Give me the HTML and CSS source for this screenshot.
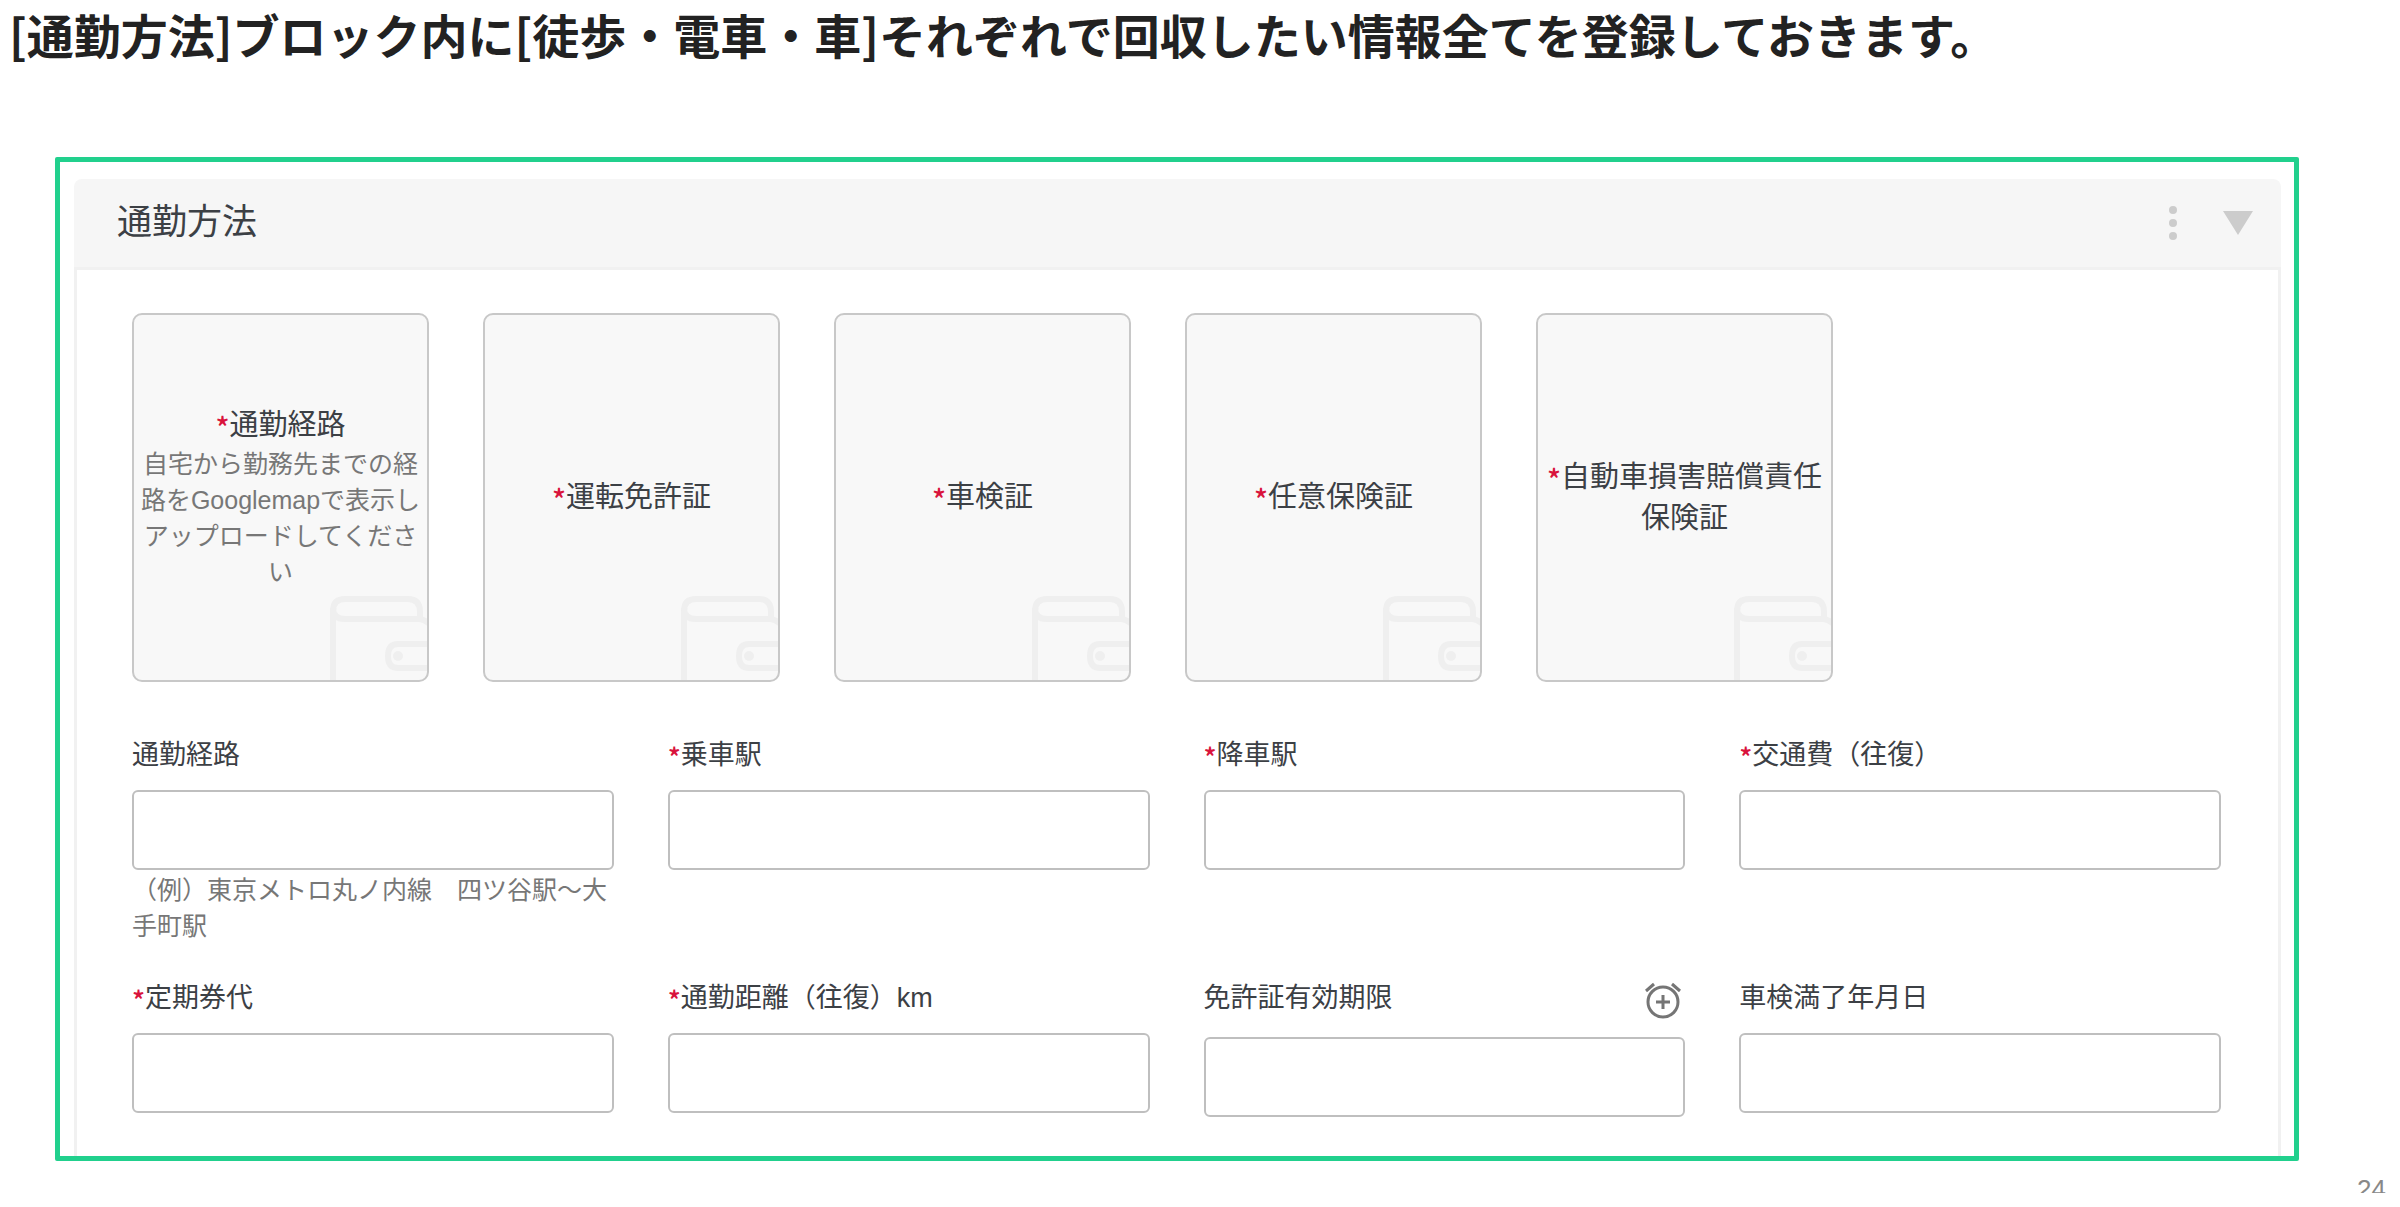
FILE: index.html
```html
<!DOCTYPE html>
<html lang="ja">
<head>
<meta charset="utf-8">
<meta name="viewport" content="width=device-width, initial-scale=1">
<title>通勤方法</title>
<link rel="stylesheet" href="styles.css">
</head>
<body>
<svg class="defs" aria-hidden="true">
  <symbol id="wallet" viewBox="0 0 100 87">
    <g fill="none" stroke="currentColor" stroke-width="6">
      <path d="M6 87V18Q6 6 18 6H81Q93 6 93 19V26"/>
      <path d="M6 15Q6 26 18 26H91Q99 26 105 34"/>
      <path d="M105 51H71Q61 51 61 63Q61 75 71 75H105"/>
    </g>
    <circle cx="71" cy="63" r="5" fill="currentColor"/>
  </symbol>
</svg>

<h1 class="title">[通勤方法]ブロック内に[徒歩・電車・車]それぞれで回収したい情報全てを登録しておきます。</h1>

<main class="frame">
  <section class="panel">
    <header class="panel-head">
      <h2 class="panel-title">通勤方法</h2>
      <div class="panel-tools">
        <button class="tool" type="button" aria-label="メニュー">
          <svg width="10" height="36" viewBox="0 0 10 36"><circle cx="5" cy="5" r="4"/><circle cx="5" cy="18" r="4"/><circle cx="5" cy="31" r="4"/></svg>
        </button>
        <button class="tool" type="button" aria-label="折りたたむ">
          <svg width="30" height="24" viewBox="0 0 30 24"><path d="M0 0H30L15 24Z"/></svg>
        </button>
      </div>
    </header>

    <form class="panel-body">
      <div class="cards">
        <button class="card" type="button">
          <span class="card-label"><span class="req">*</span>通勤経路</span>
          <span class="hint">自宅から勤務先までの経路をGooglemapで表示しアップロードしてください</span>
          <svg class="wallet" aria-hidden="true"><use href="#wallet"/></svg>
        </button>
        <button class="card" type="button">
          <span class="card-label"><span class="req">*</span>運転免許証</span>
          <svg class="wallet" aria-hidden="true"><use href="#wallet"/></svg>
        </button>
        <button class="card" type="button">
          <span class="card-label"><span class="req">*</span>車検証</span>
          <svg class="wallet" aria-hidden="true"><use href="#wallet"/></svg>
        </button>
        <button class="card" type="button">
          <span class="card-label"><span class="req">*</span>任意保険証</span>
          <svg class="wallet" aria-hidden="true"><use href="#wallet"/></svg>
        </button>
        <button class="card" type="button">
          <span class="card-label"><span class="req">*</span>自動車損害賠償責任保険証</span>
          <svg class="wallet" aria-hidden="true"><use href="#wallet"/></svg>
        </button>
      </div>

      <div class="fields">
        <div class="field">
          <div class="field-head"><label for="route">通勤経路</label></div>
          <input class="box" id="route" type="text" aria-describedby="route-hint">
          <p class="hint" id="route-hint">（例）東京メトロ丸ノ内線　四ツ谷駅～大手町駅</p>
        </div>
        <div class="field">
          <div class="field-head"><label for="from"><span class="req">*</span>乗車駅</label></div>
          <input class="box" id="from" type="text">
        </div>
        <div class="field">
          <div class="field-head"><label for="to"><span class="req">*</span>降車駅</label></div>
          <input class="box" id="to" type="text">
        </div>
        <div class="field">
          <div class="field-head"><label for="fare"><span class="req">*</span>交通費（往復）</label></div>
          <input class="box" id="fare" type="text">
        </div>
        <div class="field">
          <div class="field-head"><label for="pass"><span class="req">*</span>定期券代</label></div>
          <input class="box" id="pass" type="text">
        </div>
        <div class="field">
          <div class="field-head"><label for="distance"><span class="req">*</span>通勤距離（往復）km</label></div>
          <input class="box" id="distance" type="text">
        </div>
        <div class="field">
          <div class="field-head">
            <label for="license">免許証有効期限</label>
            <button class="alarm" type="button" aria-label="リマインダーを追加">
              <svg width="44" height="44" viewBox="0 0 44 44" fill="none" stroke="currentColor" stroke-width="3"><circle cx="22" cy="22" r="15"/><path d="M22 15V29M15 22H29M5 11L13 4M31 4L39 11"/></svg>
            </button>
          </div>
          <input class="box" id="license" type="text">
        </div>
        <div class="field">
          <div class="field-head"><label for="inspection">車検満了年月日</label></div>
          <input class="box" id="inspection" type="text">
        </div>
      </div>
    </form>
  </section>
</main>

<footer class="page-number">24</footer>
</body>
</html>
```
FILE: styles.css
```css
* {
  box-sizing: border-box;
}

body {
  margin: 0;
  background: #fff;
  color: #3c4045;
  font-family: "Liberation Sans", "Noto Sans CJK JP", sans-serif;
}

button {
  margin: 0;
  padding: 0;
  border: 0;
  background: none;
  font: inherit;
  color: inherit;
  cursor: pointer;
}

svg {
  display: block;
}

.defs {
  display: none;
}

.title {
  margin: 0;
  padding: 0 9px;
  color: #222;
  font-family: "Noto Sans CJK JP", sans-serif;
  font-size: 47px;
  font-weight: 700;
  line-height: 68px;
}

.frame {
  margin: 89px 101px 0 55px;
  padding: 17px 13px 0 14px;
  border: 5px solid #21d08d;
  border-radius: 2px;
}

.panel-head {
  display: flex;
  align-items: center;
  justify-content: space-between;
  height: 88px;
  padding: 0 28px 0 43px;
  border-radius: 8px 8px 0 0;
  background: #f6f6f6;
}

.panel-title {
  margin: 0;
  padding-bottom: 2px;
  font-size: 35px;
  font-weight: 400;
  line-height: 48px;
}

.panel-tools {
  display: flex;
  align-items: center;
  gap: 45px;
}

.tool {
  fill: #ccc;
}

.panel-body {
  padding: 43px 57px 39px 55px;
  border: solid #f1f1f1;
  border-width: 3px 3px 0;
}

.cards {
  display: flex;
  flex-wrap: wrap;
  gap: 54px;
}

.card {
  position: relative;
  display: flex;
  flex-direction: column;
  align-items: center;
  justify-content: center;
  width: 297px;
  height: 369px;
  padding: 0 4px;
  border: 2px solid #c8c8c8;
  border-radius: 10px;
  background: #f8f8f8;
  overflow: hidden;
}

.card-label {
  font-size: 29px;
  line-height: 41px;
}

.wallet {
  position: absolute;
  right: 0;
  bottom: 0;
  width: 100px;
  height: 87px;
  color: #efefef;
}

.req {
  color: #d9133c;
  font-family: "Noto Sans CJK JP", sans-serif;
  font-weight: 500;
  line-height: 0;
  vertical-align: -4px;
}

.hint {
  margin: 0;
  color: #777;
  font-size: 25px;
  line-height: 36px;
}

.fields {
  display: grid;
  grid-template-columns: repeat(4, 1fr);
  gap: 36px 54px;
  margin-top: 55px;
}

.field .hint {
  padding-top: 2px;
}

.field-head {
  display: flex;
  align-items: flex-start;
  justify-content: space-between;
  min-height: 40px;
  margin-bottom: 13px;
  font-size: 27px;
  line-height: 36px;
}

.alarm {
  color: #757575;
}

.box {
  display: block;
  width: 100%;
  height: 80px;
  padding: 0 16px;
  border: 2px solid #bfbfbf;
  border-radius: 6px;
  background: #fff;
  font: inherit;
  font-size: 27px;
}

.page-number {
  height: 20px;
  margin-top: 12px;
  padding-right: 14px;
  overflow: hidden;
  color: #888;
  font-size: 26px;
  line-height: 32px;
  text-align: right;
}
```
